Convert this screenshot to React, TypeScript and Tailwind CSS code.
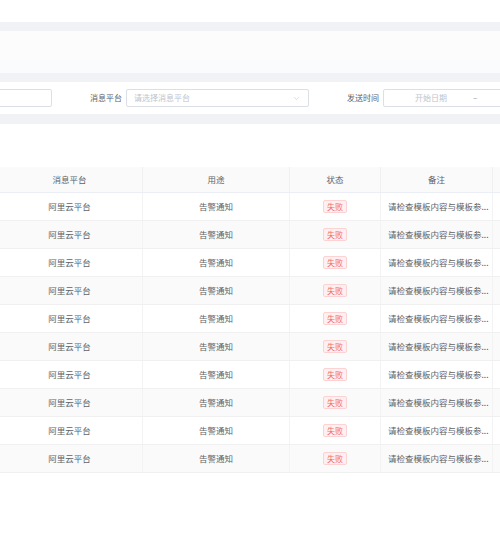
import { ChevronDown } from "lucide-react"

const rows = Array.from({ length: 10 }, (_, i) => i)

const cols = "grid grid-cols-[146px_147px_91px_112px_1fr]"

export default function App() {
  return (
    <div className="w-[500px] h-[550px] overflow-hidden bg-white text-[#606266] font-['Noto_Sans_CJK_SC','Noto_Sans',sans-serif]">
      {/* top strip */}
      <div className="h-[22px] bg-white" />
      <div className="h-[9px] bg-[#f0f2f5]" />
      <div className="h-[29px] bg-[#fcfcfd]" />
      <div className="h-[13px] bg-[#fafbfc]" />
      <div className="h-[9px] bg-[#f0f2f5]" />

      {/* search form */}
      <div className="h-[32px] w-[520px] flex items-center text-[8px] leading-none whitespace-nowrap">
        <div className="shrink-0 ml-[-10px] w-[62px] h-[18px] border border-[#dcdfe6] rounded-[2px] bg-white" />
        <span className="shrink-0 ml-[38px] text-[#606266]">消息平台</span>
        <div className="shrink-0 ml-[4px] w-[183px] h-[18px] border border-[#dcdfe6] rounded-[2px] flex items-center justify-between px-[7px]">
          <span className="text-[#c0c4cc]">请选择消息平台</span>
          <ChevronDown size={9} strokeWidth={1.5} className="text-[#c0c4cc]" />
        </div>
        <span className="shrink-0 ml-[38px] text-[#606266]">发送时间</span>
        <div className="shrink-0 ml-[4px] w-[140px] h-[18px] border border-[#dcdfe6] rounded-[2px] flex items-center">
          <span className="ml-[31px] text-[#c0c4cc]">开始日期</span>
          <span className="ml-[26px] text-[#909399]">–</span>
        </div>
      </div>

      <div className="h-[10px] bg-[#f0f2f5]" />

      {/* table */}
      <div className="mt-[43px] ml-[-3px] w-[620px] text-[8.5px] leading-none">
        <div className={`${cols} h-[26px] bg-[#fafafa] border-b border-[#ebeef5] text-[#5f6266]`}>
          <div className="flex items-center justify-center border-r border-[#f0f0f0]">消息平台</div>
          <div className="flex items-center justify-center border-r border-[#f0f0f0]">用途</div>
          <div className="flex items-center justify-center border-r border-[#f0f0f0]">状态</div>
          <div className="flex items-center justify-center border-r border-[#f0f0f0]">备注</div>
          <div />
        </div>
        {rows.map((i) => (
          <div
            key={i}
            className={`${cols} h-[28px] border-b border-[#f0f0f0] ${i % 2 === 1 ? "bg-[#fafafa]" : "bg-white"}`}
          >
            <div className="flex items-center justify-center border-r border-[#f3f3f3]">阿里云平台</div>
            <div className="flex items-center justify-center border-r border-[#f3f3f3]">告警通知</div>
            <div className="flex items-center justify-center border-r border-[#f3f3f3]">
              <span className="h-[13px] px-[3px] flex items-center bg-[#fef0f0] border border-[#fcd3d3] text-[#f56c6c] rounded-[2px] text-[8px]">
                失败
              </span>
            </div>
            <div className="flex items-center pl-[7px] border-r border-[#f3f3f3] whitespace-nowrap overflow-hidden">
              请检查模板内容与模板参...
            </div>
            <div />
          </div>
        ))}
      </div>
    </div>
  )
}
